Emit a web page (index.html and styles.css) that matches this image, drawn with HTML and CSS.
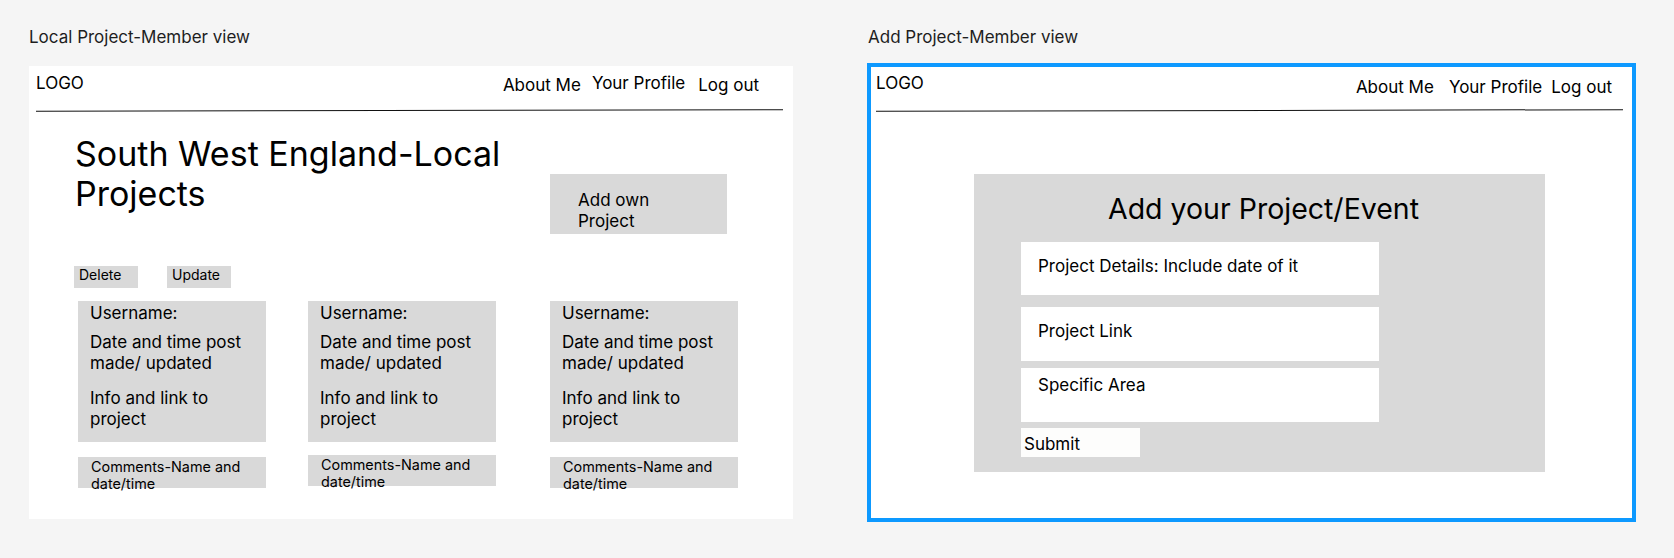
FILE: index.html
```html
<!DOCTYPE html>
<html lang="en">
<head>
<meta charset="utf-8">
<title>Wireframes</title>
<link rel="stylesheet" href="styles.css">
</head>
<body>
<main class="canvas">
  <section class="board">
    <div class="board-label">Local Project-Member view</div>
    <div class="frame frame-a">
      <header class="topbar topbar-a">
        <span class="logo">LOGO</span>
        <nav class="nav nav-a">
          <span class="nav-item low">About Me</span>
          <span class="nav-item">Your Profile</span>
          <span class="nav-item low">Log out</span>
        </nav>
      </header>
      <div class="rule rule-a"></div>
      <div class="hero">
        <h1 class="title">South West England-Local Projects</h1>
        <div class="add-btn"><span>Add own Project</span></div>
      </div>
      <div class="actions">
        <span class="chip">Delete</span>
        <span class="chip">Update</span>
      </div>
      <div class="posts">
        <div class="post">
          <div class="card">
            <p class="line">Username:</p>
            <p class="line date">Date and time post made/ updated</p>
            <p class="line info">Info and link to project</p>
          </div>
          <div class="comments">Comments-Name and date/time</div>
        </div>
        <div class="post post-2">
          <div class="card">
            <p class="line">Username:</p>
            <p class="line date">Date and time post made/ updated</p>
            <p class="line info">Info and link to project</p>
          </div>
          <div class="comments">Comments-Name and date/time</div>
        </div>
        <div class="post post-3">
          <div class="card">
            <p class="line">Username:</p>
            <p class="line date">Date and time post made/ updated</p>
            <p class="line info">Info and link to project</p>
          </div>
          <div class="comments">Comments-Name and date/time</div>
        </div>
      </div>
    </div>
  </section>

  <section class="board board-b">
    <div class="board-label">Add Project-Member view</div>
    <div class="frame frame-b">
      <header class="topbar topbar-b">
        <span class="logo">LOGO</span>
        <nav class="nav nav-b">
          <span class="nav-item">About Me</span>
          <span class="nav-item">Your Profile</span>
          <span class="nav-item">Log out</span>
        </nav>
      </header>
      <div class="rule rule-b"></div>
      <div class="form-box">
        <h2 class="form-title">Add your Project/Event</h2>
        <div class="field field-1">Project Details: Include date of it</div>
        <div class="field field-2">Project Link</div>
        <div class="field field-3">Specific Area</div>
        <div class="submit">Submit</div>
      </div>
    </div>
  </section>
</main>
</body>
</html>
```

FILE: styles.css
```css
* { box-sizing: border-box; }

html, body {
  margin: 0;
  padding: 0;
  background: #f5f5f5;
}

body {
  font-family: Inter, "Noto Sans", sans-serif;
  color: #000;
  width: 1674px;
  height: 558px;
  overflow: hidden;
}

.canvas {
  display: flex;
  align-items: flex-start;
  padding: 27px 0 0 29px;
  gap: 75px;
}

.board-label {
  font-size: 17px;
  line-height: 20px;
  color: #1e1e1e;
}

.frame {
  background: #fff;
  width: 764px;
  height: 453px;
  margin-top: 19px;
}

.frame-b {
  width: 761px;
  height: 451px;
  margin-left: 3px;
  margin-top: 20px;
  outline: 4px solid #0d99ff;
}

/* top bar */
.topbar {
  display: flex;
  justify-content: space-between;
  align-items: flex-start;
  font-size: 17px;
  line-height: 20px;
}
.topbar-a { padding: 7px 34px 0 7px; }
.topbar-b { padding: 6px 20px 0 5px; }

.nav { display: flex; align-items: flex-start; }
.nav-a { gap: 11px; }
.nav-a .nav-item:nth-child(2) { margin-right: 2px; }
.nav-a .low { margin-top: 2px; }
.nav-b { margin-top: 4px; }
.nav-b .nav-item:nth-child(1) { margin-right: 15px; }
.nav-b .nav-item:nth-child(2) { margin-right: 9px; }

.rule {
  height: 0;
  border-top: 1.5px solid #111;
  transform: rotate(-0.13deg);
}
.rule-a { margin: 15px 10px 0 7px; }
.rule-b { margin: 13px 9px 0 5px; }

/* left frame */
.hero {
  display: flex;
  align-items: flex-start;
  padding-left: 46px;
  margin-top: 23px;
}
.title {
  width: 450px;
  margin: 0;
  font-size: 34px;
  line-height: 40px;
  font-weight: 400;
}
.add-btn {
  width: 177px;
  height: 60px;
  margin: 40px 0 0 25px;
  padding: 16px 48px 0 28px;
  background: #d9d9d9;
  font-size: 17px;
  line-height: 21px;
}

.actions {
  display: flex;
  gap: 29px;
  margin-top: 32px;
  padding-left: 45px;
}
.chip {
  width: 64px;
  height: 22px;
  padding: 0 0 0 5px;
  background: #d9d9d9;
  font-size: 14px;
  line-height: 17px;
}

.posts {
  display: flex;
  align-items: flex-start;
  margin-top: 13px;
  padding-left: 49px;
}
.post { width: 188px; }
.post-2 { margin-left: 42px; }
.post-3 { margin-left: 54px; }

.card {
  height: 141px;
  background: #d9d9d9;
  padding: 2px 10px 0 12px;
  font-size: 17px;
  line-height: 21px;
}
.line { margin: 0; }
.line.date { margin-top: 8px; }
.line.info { margin-top: 14px; }

.comments {
  height: 31px;
  margin-top: 15px;
  padding: 1px 0 0 13px;
  background: #d9d9d9;
  font-size: 14.4px;
  line-height: 17px;
}
.post-2 .comments { margin-top: 13px; }

/* right frame */
.form-box {
  width: 571px;
  height: 298px;
  margin: 63px 0 0 103px;
  padding-top: 18px;
  background: #d9d9d9;
}
.form-title {
  margin: 0;
  padding-left: 8px;
  text-align: center;
  font-size: 28.5px;
  line-height: 34px;
  font-weight: 400;
}
.field {
  width: 358px;
  margin-left: 47px;
  background: #fff;
  padding-left: 17px;
  font-size: 17px;
  line-height: 20px;
}
.field-1 { height: 53px; margin-top: 16px; padding-top: 14px; }
.field-2 { height: 54px; margin-top: 12px; padding-top: 14px; }
.field-3 { height: 54px; margin-top: 7px; padding-top: 7px; }

.submit {
  width: 119px;
  height: 29px;
  margin: 6px 0 0 47px;
  padding: 6px 0 0 3px;
  background: #fdfdfc;
  font-size: 17px;
  line-height: 20px;
}
```
